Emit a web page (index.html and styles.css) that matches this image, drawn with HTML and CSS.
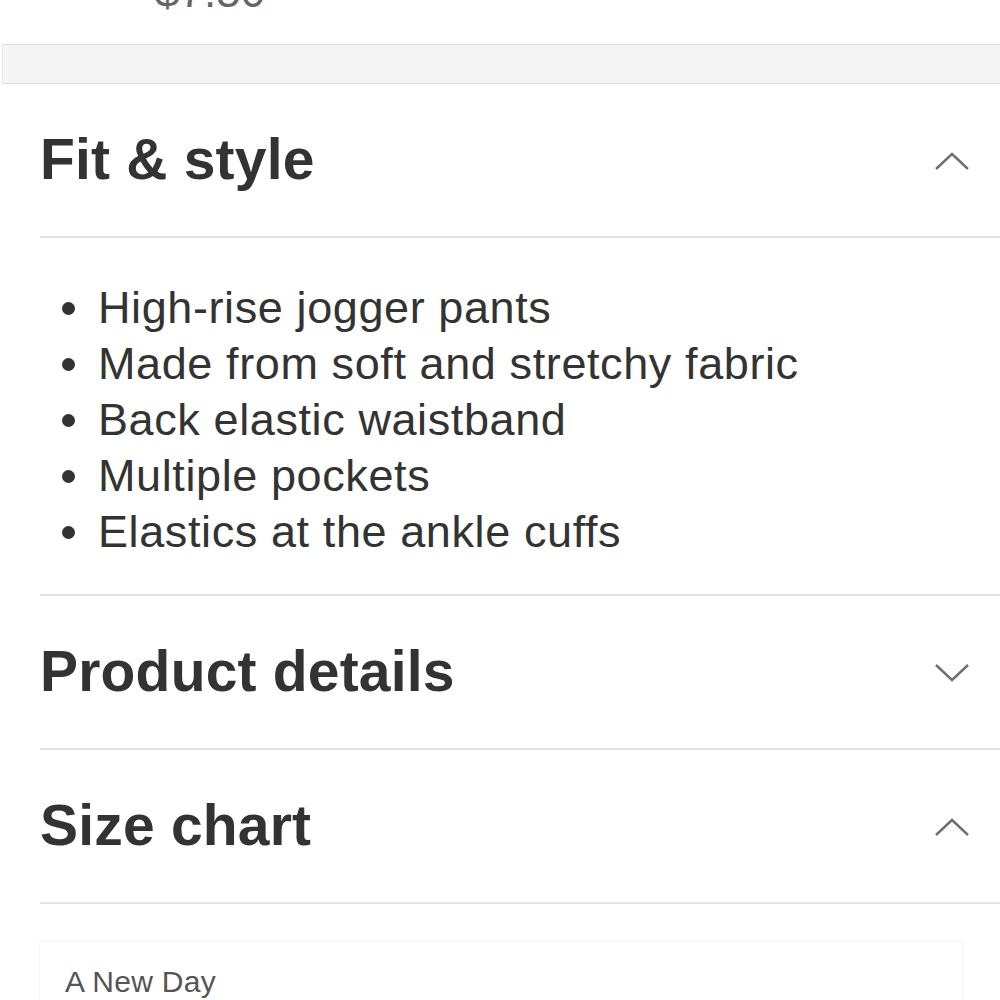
FILE: index.html
```html
<!DOCTYPE html>
<html lang="en">
<head>
    <meta charset="UTF-8">
    <meta name="viewport" content="width=device-width, initial-scale=1.0">
    <title>Product</title>
    <link rel="stylesheet" href="styles.css">
</head>
<body>
    <div class="preco">
        <span>$7.50</span>
    </div>
    <div class="faixa"></div>

    <div class="secao">
        <div class="cabeca">
            <h2>Fit &amp; style</h2>
            <svg class="seta" width="36" height="20" viewBox="0 0 36 20">
                <polyline points="2,18 18,3 34,18" />
            </svg>
        </div>
        <ul class="lista">
            <li>High-rise jogger pants</li>
            <li>Made from soft and stretchy fabric</li>
            <li>Back elastic waistband</li>
            <li>Multiple pockets</li>
            <li>Elastics at the ankle cuffs</li>
        </ul>
    </div>

    <div class="secao">
        <div class="cabeca">
            <h2>Product details</h2>
            <svg class="seta" width="36" height="20" viewBox="0 0 36 20">
                <polyline points="2,2 18,17 34,2" />
            </svg>
        </div>
    </div>

    <div class="secao">
        <div class="cabeca">
            <h2>Size chart</h2>
            <svg class="seta" width="36" height="20" viewBox="0 0 36 20">
                <polyline points="2,18 18,3 34,18" />
            </svg>
        </div>
        <div class="cartao">
            <p>A New Day</p>
        </div>
    </div>
</body>
</html>
```

FILE: styles.css
```css
body {
    margin: 0;
    font-family: "Liberation Sans", Arial, sans-serif;
    color: #333;
    background: #fff;
}
.preco {
    height: 44px;
    overflow: hidden;
    padding-left: 155px;
}
.preco span {
    display: block;
    font-size: 44px;
    line-height: 44px;
    margin-top: -30px;
    color: #666;
}
.faixa {
    height: 38px;
    margin-left: 2px;
    background: #f5f5f5;
    border-top: 1px solid #ddd;
    border-bottom: 1px solid #ddd;
    border-left: 1px solid #e6e6e6;
}
.secao {
    padding-left: 40px;
}
.cabeca {
    display: flex;
    justify-content: space-between;
    align-items: center;
    height: 152px;
    border-bottom: 2px solid #e2e2e2;
}
.cabeca h2 {
    margin: 0;
    font-size: 57px;
    letter-spacing: 0.2px;
    font-weight: bold;
    color: #333;
    padding-bottom: 2px;
}
.seta {
    margin-right: 30px;
    margin-top: 2px;
}
.seta polyline {
    fill: none;
    stroke: #707070;
    stroke-width: 2.4;
}
.lista {
    margin: 0;
    padding: 42px 0 34px 22px;
    list-style: none;
    border-bottom: 2px solid #e2e2e2;
    font-size: 45px;
    letter-spacing: 0.6px;
    line-height: 56px;
}
.lista li {
    display: flex;
    align-items: center;
}
.lista li::before {
    content: "";
    width: 13px;
    height: 13px;
    border-radius: 50%;
    background: #333;
    margin-right: 23px;
    flex-shrink: 0;
}
.cartao {
    margin-top: 38px;
    margin-right: 38px;
    padding: 22px 25px 20px;
    background: #fff;
    box-shadow: 0 0 4px rgba(0, 0, 0, 0.08);
}
.cartao p {
    margin: 0;
    font-size: 30px;
    letter-spacing: 0.3px;
    line-height: 36px;
    color: #555;
}
```
